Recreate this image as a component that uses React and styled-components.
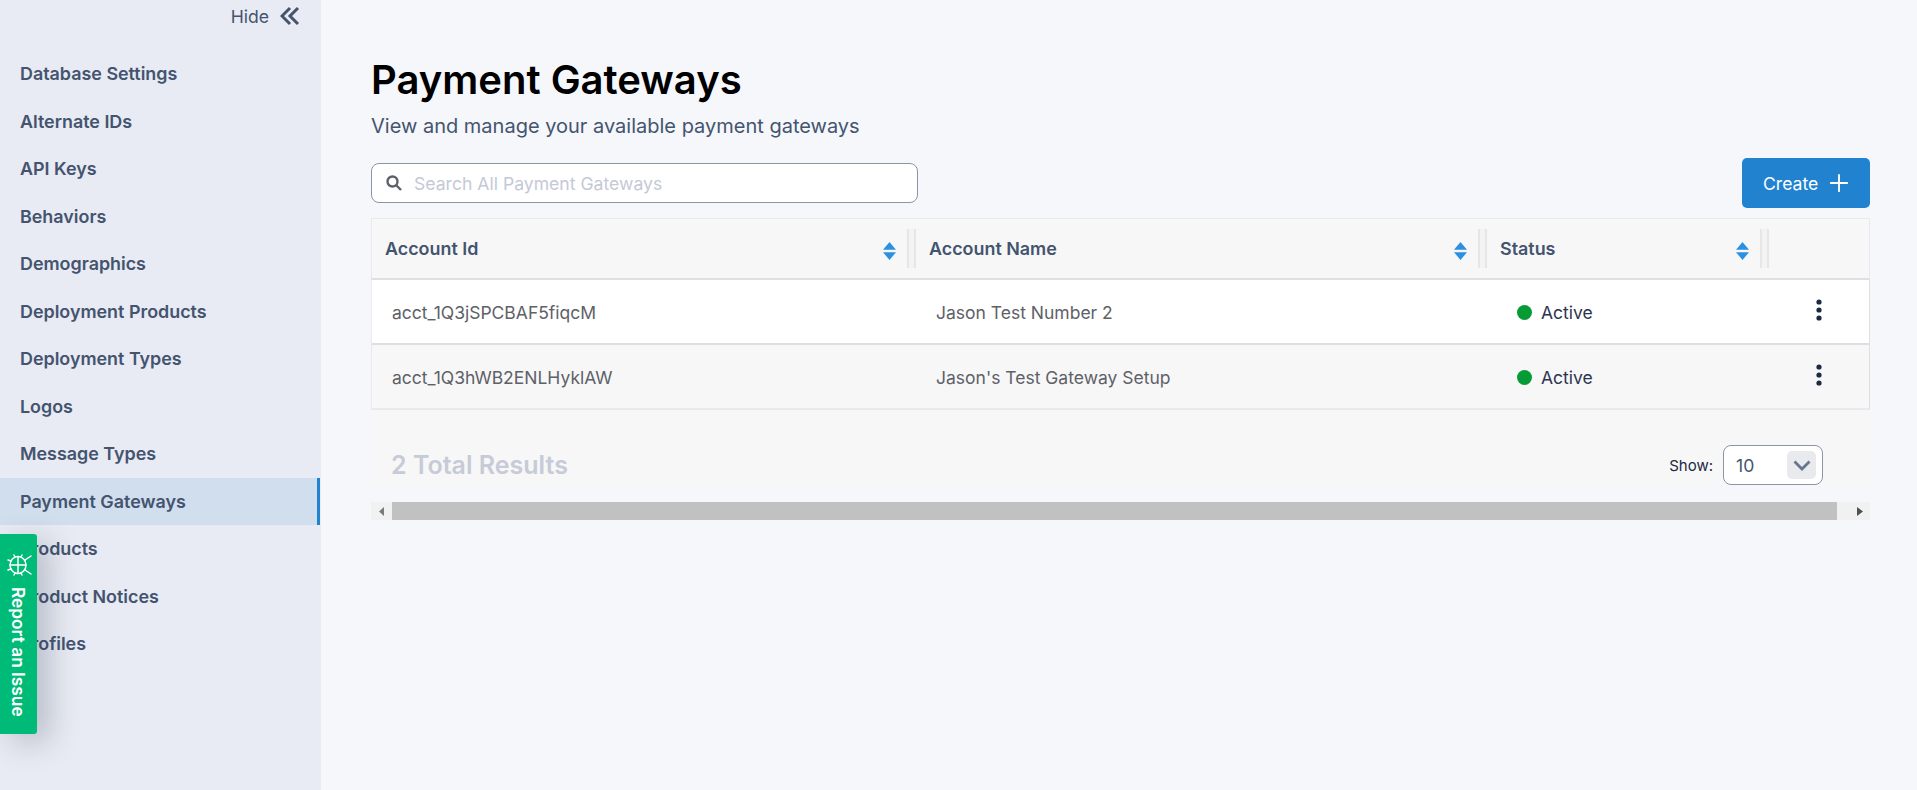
import React from 'react';
import styled, { createGlobalStyle } from 'styled-components';
import { Plus } from 'lucide-react';

const GlobalStyle = createGlobalStyle`
  html, body {
    margin: 0;
    padding: 0;
    height: 100%;
    background: #f5f7fb;
    font-family: Inter, "Noto Sans", sans-serif;
  }
  * {
    box-sizing: border-box;
  }
`;

const Page = styled.div`
  display: flex;
  height: 790px;
  overflow: hidden;
`;

const Sidebar = styled.aside`
  width: 321px;
  flex: none;
  background: #e8ebf3;
`;

const HideRow = styled.div`
  display: flex;
  justify-content: flex-end;
  align-items: center;
  gap: 11px;
  height: 32px;
  padding-right: 21px;
  font-size: 17.6px;
  color: #44546f;
`;

const Nav = styled.nav`
  display: flex;
  flex-direction: column;
  padding-top: 18px;
`;

const NavItem = styled.a`
  display: flex;
  align-items: center;
  height: 47.5px;
  padding-left: 20px;
  font-size: 17.9px;
  font-weight: 600;
  color: #44546f;
  background: ${p => (p.$active ? '#d1deee' : 'transparent')};
  border-right: 3px solid ${p => (p.$active ? '#2183cf' : 'transparent')};
  margin-right: 1px;
`;

const ReportTab = styled.div`
  position: absolute;
  left: 0;
  top: 534px;
  width: 37px;
  height: 200px;
  display: flex;
  flex-direction: column;
  align-items: center;
  gap: 10px;
  padding-top: 19px;
  background: #00bb77;
  color: #fff;
  border-radius: 0 3px 3px 0;
  box-shadow: 12px 8px 30px rgba(40, 50, 80, 0.25);
  font-size: 17.3px;
  font-weight: 600;
`;

const ReportText = styled.span`
  writing-mode: vertical-rl;
  white-space: nowrap;
`;

const Main = styled.main`
  flex: 1;
  min-width: 0;
  padding: 55px 47px 0 50px;
`;

const Title = styled.h1`
  margin: 0;
  font-size: 40px;
  line-height: 50px;
  font-weight: 600;
  color: #000;
`;

const Subtitle = styled.p`
  margin: 8px 0 0;
  font-size: 20px;
  line-height: 26px;
  color: #44546f;
`;

const Toolbar = styled.div`
  display: flex;
  justify-content: space-between;
  align-items: center;
  height: 50px;
  margin: 19px 0 10px;
`;

const SearchBox = styled.div`
  display: flex;
  align-items: center;
  gap: 12px;
  width: 547px;
  height: 40px;
  padding: 0 14px;
  background: #fff;
  border: 1px solid #8a95a8;
  border-radius: 8px;
  font-size: 17.6px;
  color: #c4c9d6;
`;

const CreateButton = styled.button`
  display: flex;
  align-items: center;
  gap: 7px;
  width: 128px;
  height: 50px;
  padding: 0 0 0 21px;
  border: 0;
  border-radius: 5px;
  background: #2183cf;
  color: #fff;
  font-family: inherit;
  font-size: 17.6px;
  font-weight: 400;
`;

const Grid = styled.div`
  display: grid;
  grid-template-columns: 544px 571px 282px 1fr;
`;

const HeaderRow = styled(Grid)`
  height: 62px;
  background: #f7f7f8;
  border: 1px solid #e9eaee;
  border-bottom: 2px solid #dfdfe2;
`;

const HeaderCell = styled.div`
  position: relative;
  display: flex;
  align-items: center;
  justify-content: space-between;
  padding: 0 20px 0 13px;
  font-size: 17.9px;
  font-weight: 600;
  color: #44546f;
  svg {
    margin-top: 5px;
  }
  &::after {
    content: '';
    display: ${p => (p.$noDivider ? 'none' : 'block')};
    position: absolute;
    right: 0;
    top: 10px;
    bottom: 10px;
    width: 5px;
    background: #f3f3f4;
    border-left: 2px solid #e6e6e8;
    border-right: 2px solid #e6e6e8;
  }
`;

const Row = styled(Grid)`
  height: 65px;
  align-items: center;
  background: ${p => (p.$striped ? '#f7f7f8' : '#fff')};
  border-bottom: 2px solid ${p => (p.$striped ? '#e9eaee' : '#dfdfe2')};
  border-right: 1px solid #dfdfe2;
  border-left: 1px solid #e9eaee;
  font-size: 17.5px;
  color: #5e6167;
`;

const Cell = styled.div`
  padding: 2px 0 0 20px;
`;

const StatusCell = styled.div`
  display: flex;
  align-items: center;
  gap: 9px;
  padding: 2px 0 0 30px;
  color: #2c3550;
`;

const Dot = styled.span`
  flex: none;
  width: 15px;
  height: 15px;
  border-radius: 50%;
  background: #079b36;
`;

const KebabCell = styled.div`
  display: flex;
  justify-content: center;
  padding-bottom: 4px;
  color: #1d2842;
`;

const Footer = styled.div`
  display: flex;
  align-items: flex-start;
  justify-content: space-between;
  height: 74px;
  margin-bottom: 18px;
  padding: 35px 47px 0 20px;
  background: #f7f7f8;
`;

const Total = styled.div`
  font-size: 25px;
  line-height: 40px;
  font-weight: 600;
  color: #c6cbd7;
`;

const ShowGroup = styled.div`
  display: flex;
  align-items: center;
  gap: 10px;
  font-size: 15px;
  color: #1d2842;
`;

const Select = styled.div`
  display: flex;
  align-items: center;
  justify-content: space-between;
  width: 100px;
  height: 40px;
  padding: 0 6px 0 12px;
  background: #fff;
  border: 1px solid #8a95a8;
  border-radius: 8px;
  font-size: 17.6px;
  color: #44546f;
`;

const SelectArrow = styled.span`
  display: flex;
  align-items: center;
  justify-content: center;
  width: 29px;
  height: 28px;
  border-radius: 5px;
  background: #e8eaed;
`;

const ScrollBar = styled.div`
  display: flex;
  align-items: center;
  height: 18px;
  background: #f1f1f1;
`;

const ScrollArrow = styled.span`
  display: flex;
  align-items: center;
  justify-content: center;
  flex: none;
  width: ${p => p.$w}px;
  height: 18px;
  padding-left: ${p => p.$pad || 0}px;
`;

const ScrollThumb = styled.div`
  flex: 1;
  height: 18px;
  background: #c1c1c1;
`;

function SortIcon() {
  return (
    <svg width="13" height="18" viewBox="0 0 13 18">
      <path d="M6.5 0 13 7.8H0z" fill="#2b90e0" />
      <path d="M0 10.2H13L6.5 18z" fill="#2b90e0" />
    </svg>
  );
}

function Kebab() {
  return (
    <svg width="8" height="22" viewBox="0 0 8 22">
      <circle cx="4" cy="3" r="2.6" fill="currentColor" />
      <circle cx="4" cy="11" r="2.6" fill="currentColor" />
      <circle cx="4" cy="19" r="2.6" fill="currentColor" />
    </svg>
  );
}

function BugIcon() {
  return (
    <svg width="26" height="24" viewBox="0 0 26 24" fill="none" stroke="#fff" strokeWidth="1.5" strokeLinecap="round">
      <ellipse cx="12" cy="12" rx="8" ry="8.500" />
      <path d="M4 12H20M12 3.500V20.500" />
      <path d="M19 7 25 3M19 17 25 21" />
      <path d="M9 4 8 2M15 4 16 2M9 20 8 22M15 20 16 22" />
      <path d="M5 8 2 7M5 16 2 17" />
    </svg>
  );
}

const navItems = [
  'Database Settings',
  'Alternate IDs',
  'API Keys',
  'Behaviors',
  'Demographics',
  'Deployment Products',
  'Deployment Types',
  'Logos',
  'Message Types',
  'Payment Gateways',
  'Products',
  'Product Notices',
  'Profiles',
];

const rows = [
  { id: 'acct_1Q3jSPCBAF5fiqcM', name: 'Jason Test Number 2' },
  { id: 'acct_1Q3hWB2ENLHyklAW', name: "Jason's Test Gateway Setup" },
];

export default function App() {
  return (
    <Page>
      <GlobalStyle />
      <Sidebar>
        <HideRow>
          Hide
          <svg width="20" height="20" viewBox="0 0 20 20" fill="none" stroke="#44546f" strokeWidth="3">
            <path d="M10 2 2 10l8 8M18 2l-8 8 8 8" />
          </svg>
        </HideRow>
        <Nav>
          {navItems.map(item => (
            <NavItem key={item} $active={item === 'Payment Gateways'}>{item}</NavItem>
          ))}
        </Nav>
      </Sidebar>
      <ReportTab>
        <BugIcon />
        <ReportText>Report an Issue</ReportText>
      </ReportTab>
      <Main>
        <Title>Payment Gateways</Title>
        <Subtitle>View and manage your available payment gateways</Subtitle>
        <Toolbar>
          <SearchBox>
            <svg width="16" height="16" viewBox="0 0 16 16" fill="none" stroke="#5e6167" strokeWidth="2.4">
              <circle cx="6.5" cy="6.5" r="5" />
              <path d="M10.5 10.5 15 15" />
            </svg>
            Search All Payment Gateways
          </SearchBox>
          <CreateButton>
            Create
            <Plus size={28} strokeWidth={1.6} />
          </CreateButton>
        </Toolbar>
        <HeaderRow>
          <HeaderCell>Account Id<SortIcon /></HeaderCell>
          <HeaderCell>Account Name<SortIcon /></HeaderCell>
          <HeaderCell>Status<SortIcon /></HeaderCell>
          <HeaderCell $noDivider />
        </HeaderRow>
        {rows.map((row, i) => (
          <Row key={row.id} $striped={i === 1}>
            <Cell>{row.id}</Cell>
            <Cell>{row.name}</Cell>
            <StatusCell><Dot />Active</StatusCell>
            <KebabCell><Kebab /></KebabCell>
          </Row>
        ))}
        <Footer>
          <Total>2 Total Results</Total>
          <ShowGroup>
            Show:
            <Select>
              10
              <SelectArrow>
                <svg width="18" height="11" viewBox="0 0 18 11" fill="none" stroke="#68758d" strokeWidth="2.8">
                  <path d="M1.5 1.5 9 9l7.500-7.500" />
                </svg>
              </SelectArrow>
            </Select>
          </ShowGroup>
        </Footer>
        <ScrollBar>
          <ScrollArrow $w={21}>
            <svg width="6" height="9" viewBox="0 0 6 9"><path d="M5 0v9L0 4.500z" fill="#7a7a7a" /></svg>
          </ScrollArrow>
          <ScrollThumb />
          <ScrollArrow $w={33} $pad={13}>
            <svg width="6" height="9" viewBox="0 0 6 9"><path d="M0 0v9l6-4.500z" fill="#505050" /></svg>
          </ScrollArrow>
        </ScrollBar>
      </Main>
    </Page>
  );
}
